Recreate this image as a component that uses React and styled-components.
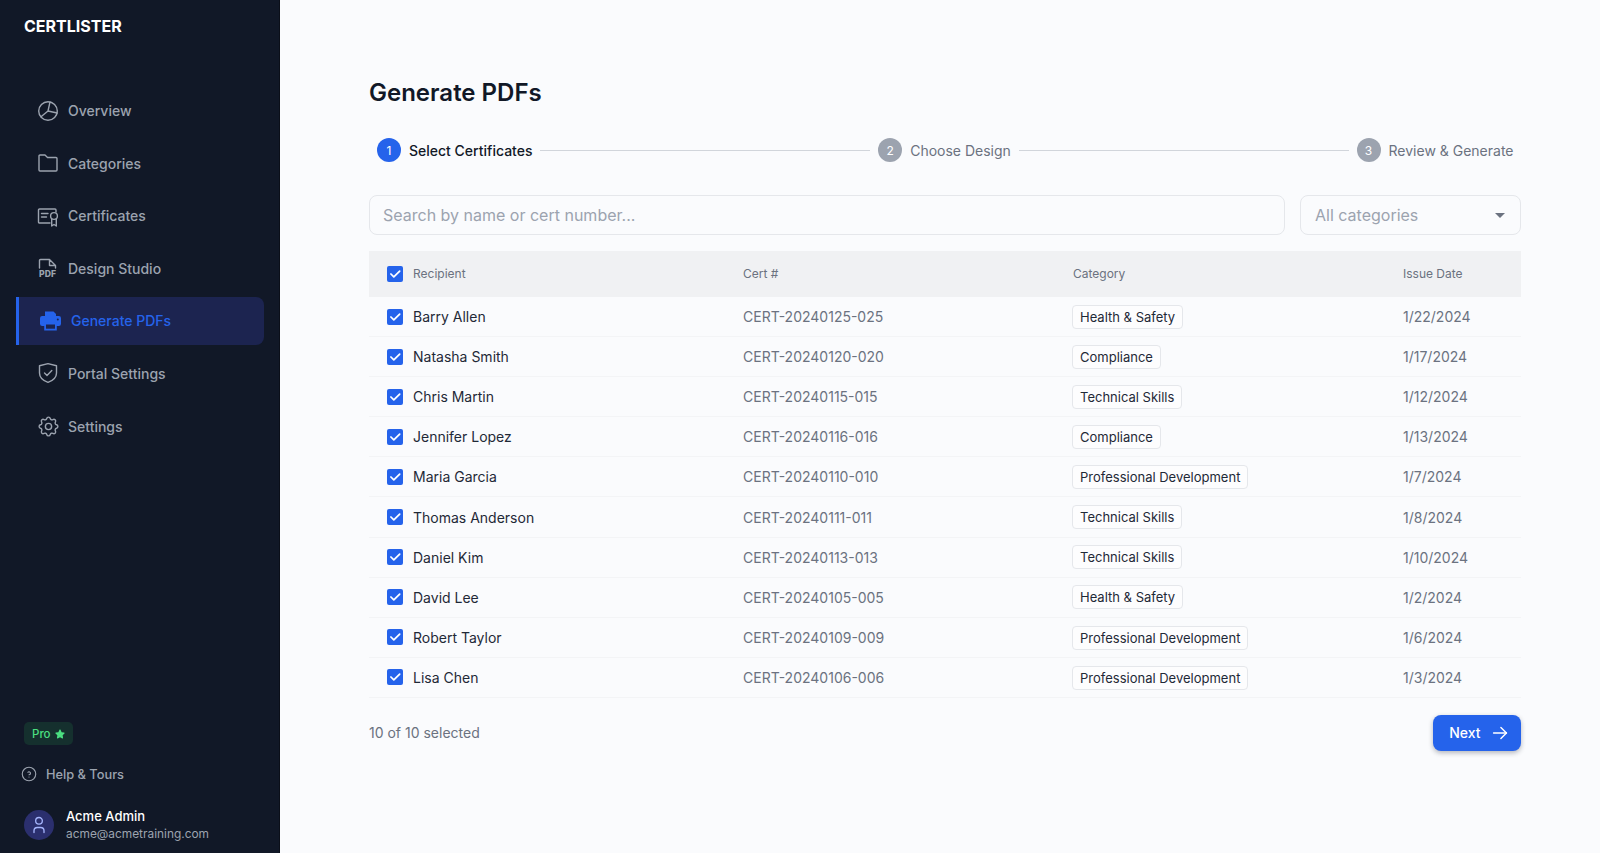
import React from 'react'
import styled, { createGlobalStyle } from 'styled-components'
import { TbSettings, TbHelpCircle, TbUser, TbArrowRight, TbCheck } from 'react-icons/tb'
import { FaStar } from 'react-icons/fa'

const GlobalStyle = createGlobalStyle`
  html, body { margin: 0; padding: 0; height: 100%; }
  body { font-family: Inter, 'Noto Sans', sans-serif; background: #fafbfd; color: #111827; overflow: hidden; }
  #root { height: 100%; }
  * { box-sizing: border-box; }
`

const Page = styled.div`
  display: flex;
  height: 853px;
`

const Sidebar = styled.aside`
  width: 280px;
  flex: none;
  background: #111827;
  display: flex;
  flex-direction: column;
  border-right: 1px solid #0b0f19;
`

const Logo = styled.div`
  padding: 16px 24px 0;
  height: 84px;
  font-size: 16px;
  font-weight: 700;
  line-height: 20px;
  color: #fff;
`

const Nav = styled.nav`
  display: flex;
  flex-direction: column;
  gap: 4.6px;
  padding: 2.5px 15px 0 16px;
`

const NavItem = styled.a`
  display: flex;
  align-items: center;
  gap: 10px;
  height: 48px;
  padding-left: ${({ $active }) => ($active ? '21px' : '22px')};
  border-radius: ${({ $active }) => ($active ? '0 8px 8px 0' : '8px')};
  border-left: ${({ $active }) => ($active ? '3px solid #2563eb' : 'none')};
  background: ${({ $active }) => ($active ? '#1c2450' : 'transparent')};
  color: ${({ $active }) => ($active ? '#2563eb' : '#9ca3af')};
  font-size: 14px;
  font-weight: 500;
`

const IconSlot = styled.span`
  width: ${({ $active }) => ($active ? '21px' : '20px')};
  height: 20px;
  flex: none;
  display: flex;
  align-items: center;
  justify-content: center;
  svg { flex: none; overflow: visible; }
`

const SidebarFooter = styled.div`
  margin-top: auto;
  padding: 0 0 11px 24px;
`

const ProBadge = styled.div`
  display: inline-flex;
  align-items: center;
  gap: 4px;
  height: 23px;
  padding: 0 8px;
  border-radius: 5px;
  background: #15302e;
  color: #4ade80;
  font-size: 11.5px;
  font-weight: 500;
`

const HelpLink = styled.div`
  display: flex;
  align-items: center;
  gap: 8px;
  margin: 17px 0 0 -4px;
  height: 24px;
  color: #9ca3af;
  font-size: 12.8px;
  font-weight: 500;
`

const UserRow = styled.div`
  display: flex;
  align-items: center;
  gap: 12px;
  margin-top: 22px;
`

const Avatar = styled.div`
  width: 30px;
  height: 30px;
  border-radius: 50%;
  background: #2b2f6e;
  color: #a5b4fc;
  display: flex;
  align-items: center;
  justify-content: center;
`

const UserName = styled.div`
  color: #fff;
  font-size: 13px;
  font-weight: 500;
  line-height: 17px;
`

const UserMail = styled.div`
  color: #9ca3af;
  font-size: 11.9px;
  line-height: 17px;
`

const Main = styled.main`
  flex: 1;
  min-width: 0;
  padding: 77px 79.5px 0 89px;
`

const Title = styled.h1`
  margin: 0;
  font-size: 24px;
  line-height: 32px;
  font-weight: 600;
  color: #111827;
`

const Stepper = styled.div`
  display: flex;
  align-items: center;
  gap: 8px;
  padding: 0 7px 0 8px;
  margin-top: 29px;
  height: 24px;
`

const StepDot = styled.span`
  width: 24px;
  height: 24px;
  flex: none;
  border-radius: 50%;
  background: ${({ $on }) => ($on ? '#2563eb' : '#9ca3af')};
  color: #fff;
  font-size: 12px;
  display: flex;
  align-items: center;
  justify-content: center;
`

const StepLabel = styled.span`
  font-size: 14px;
  font-weight: ${({ $on }) => ($on ? 500 : 400)};
  color: ${({ $on }) => ($on ? '#111827' : '#6b7280')};
  white-space: nowrap;
`

const StepLine = styled.span`
  flex: 1;
  height: 1px;
  background: #d1d5db;
`

const Filters = styled.div`
  display: flex;
  gap: 15px;
  margin-top: 33px;
`

const SearchBox = styled.div`
  flex: 1;
  height: 40px;
  border: 1px solid #e5e7eb;
  border-radius: 8px;
  padding: 0 13px;
  display: flex;
  align-items: center;
  font-size: 16px;
  color: #9ca3af;
`

const CategorySelect = styled(SearchBox)`
  flex: none;
  width: 220.5px;
  justify-content: space-between;
  padding: 0 15px 0 14px;
`

const Caret = styled.span`
  width: 0;
  height: 0;
  border-left: 5px solid transparent;
  border-right: 5px solid transparent;
  border-top: 5px solid #6b7280;
`

const Table = styled.div`
  margin-top: 16px;
`

const Row = styled.div`
  display: grid;
  grid-template-columns: 374px 330px 330px 1fr;
  align-items: center;
  height: ${({ $head }) => ($head ? '46px' : '40.1px')};
  padding-bottom: ${({ $head }) => ($head ? '1px' : '0')};
  background: ${({ $head }) => ($head ? '#f0f1f3' : 'transparent')};
  border-bottom: ${({ $head }) => ($head ? 'none' : '1px solid #f3f4f6')};
  font-size: ${({ $head }) => ($head ? '12px' : '14px')};
  color: #6b7280;
`

const NameCell = styled.div`
  display: flex;
  align-items: center;
  gap: 10px;
  padding-left: 18px;
  color: ${({ $head }) => ($head ? '#6b7280' : '#1f2937')};
`

const Check = styled.span`
  width: 16px;
  height: 16px;
  flex: none;
  border-radius: 2px;
  background: #2563eb;
  color: #fff;
  display: flex;
  align-items: center;
  justify-content: center;
`

const Tag = styled.span`
  display: inline-block;
  height: 24px;
  line-height: 22px;
  margin: 0.5px 0 0 -1px;
  padding: 0 7px;
  border: 1px solid #e5e7eb;
  border-radius: 4px;
  background: #fdfdfe;
  font-size: 13px;
  color: #1f2937;
  white-space: nowrap;
`

const Footer = styled.div`
  display: flex;
  justify-content: space-between;
  align-items: center;
  margin-top: 17px;
  font-size: 14px;
  color: #6b7280;
`

const NextButton = styled.button`
  display: flex;
  align-items: center;
  gap: 8px;
  height: 36px;
  padding: 0 10px 0 16px;
  border: none;
  border-radius: 8px;
  background: #2563eb;
  color: #fff;
  font: 500 14px Inter, sans-serif;
  box-shadow: 0 2px 5px rgba(17, 24, 39, 0.3);
`

const Glyph = ({ children }) => (
  <svg width="20" height="20" viewBox="0 0 20 20" fill="none" stroke="currentColor" strokeWidth="1.4" strokeLinecap="round" strokeLinejoin="round">
    {children}
  </svg>
)

const PieIcon = () => (
  <Glyph>
    <circle cx="10" cy="10" r="9.3" />
    <path d="M12 .9 10 10 3 15.7M10 10l9.2 2" />
  </Glyph>
)

const FolderIcon = () => (
  <Glyph>
    <path d="M1 3a1 1 0 0 1 1-1h5l2.5 2.5H18a1 1 0 0 1 1 1V17a1 1 0 0 1-1 1H2a1 1 0 0 1-1-1Z" />
  </Glyph>
)

const CertificateIcon = () => (
  <Glyph>
    <path d="M12 17H1.5a1 1 0 0 1-1-1V4a1 1 0 0 1 1-1H17a1 1 0 0 1 1 1v2" />
    <path d="M3.5 7.5h6.5M3.5 11h5" />
    <circle cx="16" cy="10" r="3.4" />
    <path d="M13.7 13v7l2.3-1.5 2.3 1.5v-7" />
  </Glyph>
)

const PdfIcon = () => (
  <Glyph>
    <path d="M1.5 10V2.5a1 1 0 0 1 1-1h9l6 6V10M11.5 1.5v6h6" />
    <text x="9.5" y="19.4" textAnchor="middle" fontFamily="Inter, sans-serif" fontSize="8.6" fontWeight="800" fill="currentColor" stroke="none">PDF</text>
  </Glyph>
)

const PrinterIcon = () => (
  <svg width="21" height="20" viewBox="0 0 21 20" fill="currentColor">
    <path d="M5 .5h8.5L16 3v3H5Z" />
    <rect x="0" y="5" width="21" height="10" rx="2.2" />
    <path d="M4.2 11.5h12.6v8H4.2Z" />
    <path d="M6 13.5h9v4.2H6Z" fill="#1c2450" />
    <circle cx="17.8" cy="8.4" r="1" fill="#1c2450" />
  </svg>
)

const ShieldIcon = () => (
  <Glyph>
    <path d="M10 .6 18.5 2.8V10c0 4.8-3.8 7.7-8.5 9.4C5.3 17.7 1.5 14.8 1.5 10V2.8Z" />
    <path d="M6.5 10l2.5 2.5 4.8-5" />
  </Glyph>
)

const navItems = [
  { label: 'Overview', icon: <PieIcon /> },
  { label: 'Categories', icon: <FolderIcon /> },
  { label: 'Certificates', icon: <CertificateIcon /> },
  { label: 'Design Studio', icon: <PdfIcon /> },
  { label: 'Generate PDFs', icon: <PrinterIcon />, active: true },
  { label: 'Portal Settings', icon: <ShieldIcon /> },
  { label: 'Settings', icon: <TbSettings size={25} strokeWidth={1.35} /> },
]

const rows = [
  ['Barry Allen', 'CERT-20240125-025', 'Health & Safety', '1/22/2024'],
  ['Natasha Smith', 'CERT-20240120-020', 'Compliance', '1/17/2024'],
  ['Chris Martin', 'CERT-20240115-015', 'Technical Skills', '1/12/2024'],
  ['Jennifer Lopez', 'CERT-20240116-016', 'Compliance', '1/13/2024'],
  ['Maria Garcia', 'CERT-20240110-010', 'Professional Development', '1/7/2024'],
  ['Thomas Anderson', 'CERT-20240111-011', 'Technical Skills', '1/8/2024'],
  ['Daniel Kim', 'CERT-20240113-013', 'Technical Skills', '1/10/2024'],
  ['David Lee', 'CERT-20240105-005', 'Health & Safety', '1/2/2024'],
  ['Robert Taylor', 'CERT-20240109-009', 'Professional Development', '1/6/2024'],
  ['Lisa Chen', 'CERT-20240106-006', 'Professional Development', '1/3/2024'],
]

const CheckMark = () => (
  <Check>
    <TbCheck size={14} strokeWidth={3} />
  </Check>
)

export default function App() {
  return (
    <Page>
      <GlobalStyle />
      <Sidebar>
        <Logo>CERTLISTER</Logo>
        <Nav>
          {navItems.map((item) => (
            <NavItem key={item.label} $active={item.active}>
              <IconSlot $active={item.active}>{item.icon}</IconSlot>
              {item.label}
            </NavItem>
          ))}
        </Nav>
        <SidebarFooter>
          <ProBadge>
            Pro <FaStar size={10} />
          </ProBadge>
          <HelpLink>
            <TbHelpCircle size={18} strokeWidth={1.5} />
            Help &amp; Tours
          </HelpLink>
          <UserRow>
            <Avatar>
              <TbUser size={20} strokeWidth={1.6} />
            </Avatar>
            <div>
              <UserName>Acme Admin</UserName>
              <UserMail>acme@acmetraining.com</UserMail>
            </div>
          </UserRow>
        </SidebarFooter>
      </Sidebar>
      <Main>
        <Title>Generate PDFs</Title>
        <Stepper>
          <StepDot $on>1</StepDot>
          <StepLabel $on>Select Certificates</StepLabel>
          <StepLine />
          <StepDot>2</StepDot>
          <StepLabel>Choose Design</StepLabel>
          <StepLine />
          <StepDot>3</StepDot>
          <StepLabel>Review &amp; Generate</StepLabel>
        </Stepper>
        <Filters>
          <SearchBox>Search by name or cert number...</SearchBox>
          <CategorySelect>
            All categories
            <Caret />
          </CategorySelect>
        </Filters>
        <Table>
          <Row $head>
            <NameCell $head>
              <CheckMark />
              Recipient
            </NameCell>
            <div>Cert #</div>
            <div>Category</div>
            <div>Issue Date</div>
          </Row>
          {rows.map(([name, cert, category, date]) => (
            <Row key={cert}>
              <NameCell>
                <CheckMark />
                {name}
              </NameCell>
              <div>{cert}</div>
              <div>
                <Tag>{category}</Tag>
              </div>
              <div>{date}</div>
            </Row>
          ))}
        </Table>
        <Footer>
          <span>10 of 10 selected</span>
          <NextButton>
            Next
            <TbArrowRight size={22} strokeWidth={1.6} />
          </NextButton>
        </Footer>
      </Main>
    </Page>
  )
}
